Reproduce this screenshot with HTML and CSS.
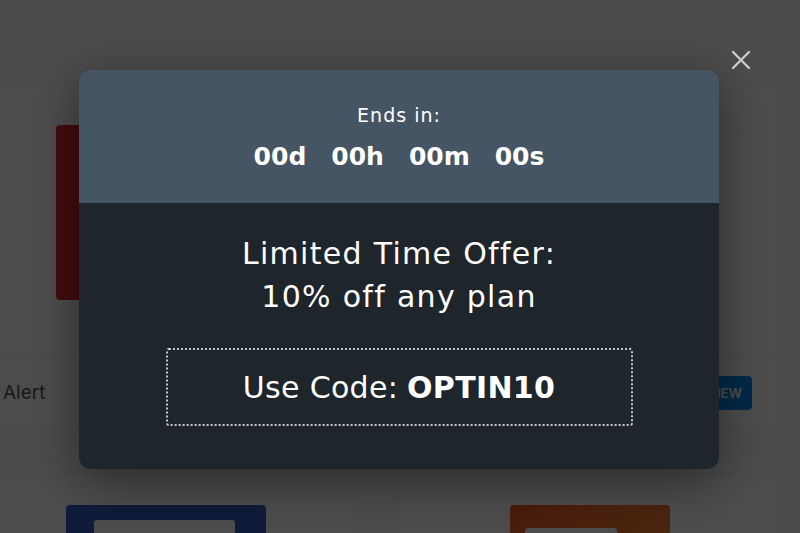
FILE: index.html
```html
<!DOCTYPE html>
<html lang="en">
<head>
<meta charset="UTF-8">
<meta name="viewport" content="width=device-width, initial-scale=1.0">
<title>Limited Time Offer</title>
<link rel="stylesheet" href="styles.css">
</head>
<body>

<div class="page">
    <div class="grid">
        <div class="card">
            <div class="card-media">
                <div class="poster poster-red"></div>
            </div>
            <div class="card-footer">
                <span class="card-title">Alert</span>
            </div>
        </div>
        <div class="card">
            <div class="card-media"></div>
            <div class="card-footer footer-right">
                <span class="view-btn">VIEW</span>
            </div>
        </div>
        <div class="card">
            <div class="card-media media-low media-navy">
                <div class="poster poster-navy"><div class="poster-label"></div></div>
            </div>
        </div>
        <div class="card">
            <div class="card-media media-low media-orange">
                <div class="poster poster-orange"><div class="poster-label small"></div></div>
            </div>
        </div>
    </div>
</div>

<div class="overlay">
    <button class="close-btn" aria-label="Close">
        <svg width="20" height="20" viewBox="0 0 20 20">
            <path d="M2 2 L18 18 M18 2 L2 18" stroke="#cacaca" stroke-width="2.4" stroke-linecap="round"/>
        </svg>
    </button>

    <div class="modal">
        <div class="modal-top">
            <div class="ends-label">Ends in:</div>
            <div class="countdown">
                <span>00d</span>
                <span>00h</span>
                <span>00m</span>
                <span>00s</span>
            </div>
        </div>
        <div class="modal-body">
            <h2 class="offer">Limited Time Offer:<br>10% off any plan</h2>
            <div class="code-box">Use Code: <strong>OPTIN10</strong></div>
        </div>
    </div>
</div>

</body>
</html>
```

FILE: styles.css
```css
/* page underneath the popup */
body {
    margin: 0;
    background: #fafafa;
    font-family: "Inter", "Open Sans", sans-serif;
    overflow: hidden;
}
.page {
    height: 533px;
    padding-top: 82px;
    box-sizing: border-box;
    overflow: hidden;
}
.grid {
    display: grid;
    grid-template-columns: 420px 383px;
    column-gap: 41px;
    row-gap: 45px;
    margin-left: -63px;
}
.card {
    background: #fff;
    border: 1px solid #f0f0f0;
    border-radius: 4px;
}
.card-media {
    height: 272px;
    padding: 42px 0 0 118px;
    box-sizing: border-box;
}
.media-low {
    height: 120px;
    padding-top: 29px;
}
.media-navy {
    padding-left: 128px;
}
.media-orange {
    padding-left: 111px;
}
.poster {
    width: 200px;
    height: 175px;
    border-radius: 4px;
}
.poster-red {
    background: #df2a2e;
}
.poster-navy {
    width: 200px;
    background: #355dc0;
    padding: 15px 0 0 28px;
    box-sizing: border-box;
}
.poster-orange {
    width: 160px;
    background: linear-gradient(135deg, #f55c28, #f89a38);
    padding: 23px 0 0 15px;
    box-sizing: border-box;
}
.poster-label {
    width: 141px;
    height: 60px;
    background: #fff;
    border-radius: 3px;
}
.poster-label.small {
    width: 92px;
}
.card-footer {
    height: 73px;
    border-top: 1px solid #f0f0f0;
    background: #fefefe;
    display: flex;
    align-items: center;
    padding: 0 28px 0 65px;
}
.footer-right {
    justify-content: flex-end;
}
.card-title {
    font-size: 19px;
    color: #555;
}
.view-btn {
    background: #0a8af5;
    color: #fff;
    font-size: 13px;
    font-weight: 700;
    padding: 9px 10px;
    border-radius: 4px;
}

/* popup */
.overlay {
    position: fixed;
    inset: 0;
    background: rgba(0, 0, 0, 0.7);
    display: flex;
    justify-content: center;
    align-items: flex-start;
    padding-top: 70px;
}
.close-btn {
    position: absolute;
    top: 50px;
    left: 731px;
    width: 20px;
    height: 20px;
    padding: 0;
    border: none;
    background: none;
    cursor: pointer;
}
.modal {
    width: 640px;
    margin-left: -2px;
    border-radius: 12px;
    overflow: hidden;
    color: #fff;
    text-align: center;
    font-family: "DejaVu Sans", "Inter", sans-serif;
    box-shadow: 0 12px 50px rgba(0, 0, 0, 0.45);
}
.modal-top {
    background: #465564;
    height: 133px;
    box-sizing: border-box;
    padding-top: 32px;
}
.ends-label {
    font-size: 19px;
    letter-spacing: 1px;
    line-height: 26px;
    margin-bottom: 11px;
}
.countdown {
    display: flex;
    justify-content: center;
    gap: 25px;
    font-size: 25px;
    font-weight: 700;
    line-height: 36px;
}
.modal-body {
    background: #1e252b;
    height: 266px;
    box-sizing: border-box;
    padding-top: 29px;
}
.offer {
    margin: 0;
    font-size: 30px;
    font-weight: 400;
    letter-spacing: 1.3px;
    line-height: 43px;
}
.code-box {
    width: 467px;
    height: 78px;
    box-sizing: border-box;
    margin: 30px auto 0;
    border: 2px dotted #c4c8cc;
    border-radius: 3px;
    display: flex;
    align-items: center;
    justify-content: center;
    font-size: 30px;
    letter-spacing: 0.3px;
}
.code-box strong {
    font-weight: 700;
    margin-left: 9px;
}
```
